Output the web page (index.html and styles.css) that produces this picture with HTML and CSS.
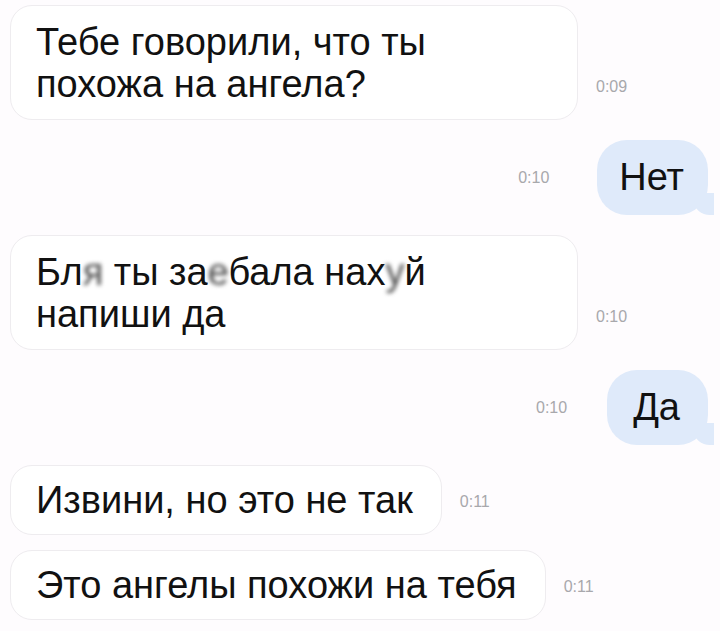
FILE: index.html
```html
<!DOCTYPE html>
<html lang="ru">
<head>
    <meta charset="UTF-8">
    <meta name="viewport" content="width=device-width, initial-scale=1.0">
    <title>Чат</title>
    <link rel="stylesheet" href="styles.css">
</head>
<body>
    <div class="chat">
        <div class="row incoming">
            <div class="bubble in wide">Тебе говорили, что ты<br>похожа на ангела?</div>
            <span class="time">0:09</span>
        </div>

        <div class="row outgoing">
            <span class="time">0:10</span>
            <div class="bubble out">Нет</div>
        </div>

        <div class="row incoming">
            <div class="bubble in wide">Бл<span class="censor">я</span> ты за<span class="censor">е</span>бала нах<span class="censor">у</span>й<br>напиши да</div>
            <span class="time">0:10</span>
        </div>

        <div class="row outgoing short">
            <span class="time">0:10</span>
            <div class="bubble out">Да</div>
        </div>

        <div class="row incoming">
            <div class="bubble in">Извини, но это не так</div>
            <span class="time">0:11</span>
        </div>

        <div class="row incoming tight">
            <div class="bubble in">Это ангелы похожи на тебя</div>
            <span class="time">0:11</span>
        </div>
    </div>
</body>
</html>
```

FILE: styles.css
```css
body {
    margin: 0;
    padding: 0;
    background-color: #fefcfe;
    font-family: 'Liberation Sans', Arial, sans-serif;
    color: #111111;
    overflow: hidden;
}
.chat {
    display: flex;
    flex-direction: column;
    gap: 20px;
    padding: 5px 12px 0 10px;
}
.row {
    display: flex;
    align-items: flex-end;
}
.row.tight {
    margin-top: -5px;
}
.row.outgoing {
    justify-content: flex-end;
    align-items: center;
}
.bubble {
    font-size: 38px;
    line-height: 42px;
    white-space: nowrap;
}
.bubble.in {
    background-color: #ffffff;
    border: 1px solid #eeecef;
    border-radius: 22px;
    padding: 13px 28px 13px 25px;
}
.bubble.wide {
    width: 513px;
    padding-top: 15px;
    padding-bottom: 14px;
}
.bubble.out {
    position: relative;
    background-color: #dfeafa;
    border-radius: 30px;
    padding: 16px 24px 17px 22px;
}
.short .bubble.out {
    padding-left: 26px;
    padding-right: 28px;
}
/* little tail at the bottom right */
.bubble.out::before {
    content: '';
    position: absolute;
    right: -6px;
    bottom: 0;
    width: 20px;
    height: 22px;
    background-color: #dfeafa;
    border-bottom-left-radius: 16px 14px;
}
.bubble.out::after {
    content: '';
    position: absolute;
    right: -26px;
    bottom: 0;
    width: 20px;
    height: 22px;
    background-color: #fefcfe;
    border-bottom-left-radius: 10px;
}
.time {
    font-size: 16px;
    color: #a8a8ac;
    margin: 0 0 24px 18px;
}
.outgoing .time {
    margin: 0 48px 0 0;
}
.outgoing.short .time {
    margin-right: 40px;
}
.censor {
    color: #4a4a4a;
    filter: blur(2px);
}
```
